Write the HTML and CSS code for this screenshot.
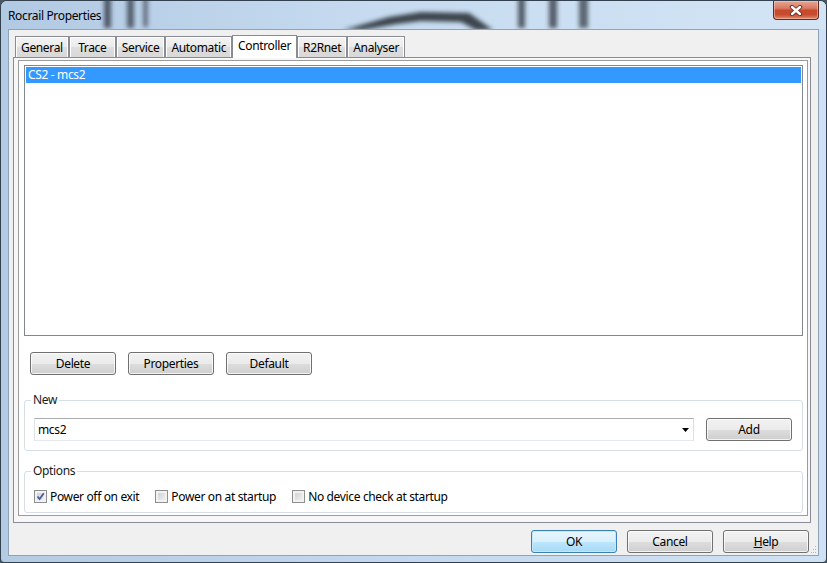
FILE: index.html
```html
<!DOCTYPE html>
<html lang="en">
<head>
    <meta charset="UTF-8">
    <meta name="viewport" content="width=device-width, initial-scale=1.0">
    <title>Rocrail Properties</title>
    <link rel="stylesheet" href="styles.css">
</head>
<body>
    <div class="window">
        <div class="titlebar">
            <!-- glass backdrop behind the caption -->
            <svg class="glass" width="825" height="28" viewBox="0 0 825 28">
                <defs>
                    <filter id="soft" x="-20%" y="-50%" width="140%" height="200%">
                        <feGaussianBlur stdDeviation="2.2"/>
                    </filter>
                </defs>
                <g filter="url(#soft)" fill="#2b333c">
                    <rect x="103" y="-4" width="7" height="31" opacity="0.75"/>
                    <rect x="126" y="-4" width="7" height="31" opacity="0.7"/>
                    <rect x="142" y="-4" width="5" height="30" opacity="0.6"/>
                    <polygon points="342,29 388,16 420,11 468,12 492,29 475,29 460,21 420,20 396,23 362,29" opacity="0.9"/>
                    <rect x="517" y="-4" width="7" height="31" opacity="0.75"/>
                    <rect x="548" y="-4" width="8" height="31" opacity="0.75"/>
                    <rect x="578" y="-4" width="9" height="31" opacity="0.7"/>
                </g>
            </svg>
            <span class="title">Rocrail Properties</span>
            <button class="close">
                <svg width="14" height="11" viewBox="0 0 14 11">
                    <path d="M3 2 L11 9 M11 2 L3 9" stroke="#6b2a20" stroke-width="4.2" stroke-linecap="round"/>
                    <path d="M3 2 L11 9 M11 2 L3 9" stroke="#fff" stroke-width="2.4" stroke-linecap="round"/>
                </svg>
            </button>
        </div>

        <div class="client">
            <div class="notebook">
                <div class="tabs">
                    <span class="tab">General</span>
                    <span class="tab">Trace</span>
                    <span class="tab">Service</span>
                    <span class="tab">Automatic</span>
                    <span class="tab active">Controller</span>
                    <span class="tab">R2Rnet</span>
                    <span class="tab">Analyser</span>
                </div>
                <div class="page">
                    <div class="panel">
                        <div class="listbox">
                            <div class="item selected">CS2 - mcs2</div>
                        </div>

                        <div class="btnrow">
                            <button class="btn">Delete</button>
                            <button class="btn">Properties</button>
                            <button class="btn">Default</button>
                        </div>

                        <fieldset class="group new-group">
                            <legend>New</legend>
                            <div class="newrow">
                                <div class="combo">
                                    <span>mcs2</span>
                                    <svg width="7" height="4" viewBox="0 0 7 4"><polygon points="0,0 7,0 3.5,4" fill="#000"/></svg>
                                </div>
                                <button class="btn">Add</button>
                            </div>
                        </fieldset>

                        <fieldset class="group options-group">
                            <legend>Options</legend>
                            <div class="checks">
                                <label class="check">
                                    <span class="box">
                                        <svg width="11" height="11" viewBox="0 0 11 11"><path d="M2.5 5.5 L4.6 8 L8.8 2.3" fill="none" stroke="#4a5d96" stroke-width="1.8"/></svg>
                                    </span>
                                    Power off on exit
                                </label>
                                <label class="check"><span class="box"></span>Power on at startup</label>
                                <label class="check"><span class="box"></span>No device check at startup</label>
                            </div>
                        </fieldset>
                    </div>
                </div>
            </div>

            <div class="dialog-buttons">
                <button class="btn default">OK</button>
                <button class="btn">Cancel</button>
                <button class="btn"><u>H</u>elp</button>
            </div>
            <svg class="grip" width="6" height="9" viewBox="0 0 6 9">
                <rect x="4" y="1" width="1" height="1" fill="#b5b5b5"/>
                <rect x="2" y="4" width="1" height="1" fill="#b5b5b5"/>
                <rect x="4" y="4" width="1" height="1" fill="#b5b5b5"/>
                <rect x="0" y="7" width="1" height="1" fill="#b5b5b5"/>
                <rect x="2" y="7" width="1" height="1" fill="#b5b5b5"/>
                <rect x="4" y="7" width="1" height="1" fill="#b5b5b5"/>
            </svg>
        </div>
    </div>
</body>
</html>
```

FILE: styles.css
```css
body {
    margin: 0;
    background: #4b5663;
    font-family: "Noto Sans", "Open Sans", sans-serif;
    font-size: 12px;
    letter-spacing: -0.35px;
    color: #000;
}

/* window frame */
.window {
    box-sizing: border-box;
    width: 827px;
    height: 563px;
    border: 1px solid #33414f;
    border-radius: 7px 7px 4px 4px;
    background: linear-gradient(90deg, #b4cbe4, #c4d9ef 50%, #cfe1f4);
    padding: 0 7px 6px;
    display: flex;
    flex-direction: column;
    overflow: hidden;
}
.titlebar {
    position: relative;
    height: 28px;
    margin: 0 -7px;
    padding: 0 7px;
    display: flex;
    justify-content: space-between;
    align-items: flex-start;
    background: linear-gradient(90deg, #b2c9e3, #c6dbf0 45%, #d3e4f5);
}
.glass {
    position: absolute;
    left: 0;
    top: 0;
}
.title {
    position: relative;
    line-height: 29px;
}
.close {
    position: relative;
    box-sizing: border-box;
    width: 46px;
    height: 19px;
    padding: 0;
    border: 1px solid #5e2a22;
    border-top: 0;
    border-radius: 0 0 4px 4px;
    background: linear-gradient(#e7a595, #d97a63 40%, #c54a2e 52%, #c94b2d 75%, #e08a6c);
    box-shadow: inset 0 0 0 1px rgba(255, 220, 210, 0.45);
    display: flex;
    align-items: center;
    justify-content: center;
}

/* dialog body */
.client {
    position: relative;
    flex: 1;
    background: #f0f0f0;
    border: 1px solid #8ea2b8;
    padding: 5px 7px 2px 4px;
    display: flex;
    flex-direction: column;
}
.notebook {
    flex: 1;
    display: flex;
    flex-direction: column;
}
.tabs {
    display: flex;
    align-items: flex-end;
    height: 22px;
    padding-left: 2px;
    position: relative;
    z-index: 1;
}
.tab {
    box-sizing: border-box;
    min-width: 47px;
    height: 21px;
    border: 1px solid #898c95;
    border-bottom: 0;
    padding: 0 5px;
    line-height: 21px;
    text-align: center;
    background: linear-gradient(#f3f3f3, #ebebeb 50%, #dedede 51%, #d8d8d8);
    box-shadow: inset 1px 1px 0 #fff, inset -1px 0 0 #fff;
}
.tab.active {
    height: 23px;
    margin-bottom: -1px;
    line-height: 20px;
    background: #fff;
    box-shadow: none;
}
.page {
    flex: 1;
    border: 1px solid #898c95;
    background: #f7f7f7;
    padding: 2px 2px 6px 4px;
    display: flex;
}
.panel {
    flex: 1;
    border: 1px solid #9b9b9b;
    background: #fff;
    padding: 4px 4px 2px 5px;
    display: flex;
    flex-direction: column;
}
.listbox {
    flex: 1;
    border: 1px solid #828790;
    padding: 1px;
    background: #fff;
}
.item {
    height: 16px;
    line-height: 16px;
    padding-left: 2px;
}
.item.selected {
    background: #3399ff;
    color: #fff;
}

/* buttons */
.btnrow {
    display: flex;
    gap: 12px;
    margin: 16px 0 0 6px;
}
.btn {
    box-sizing: border-box;
    width: 86px;
    height: 23px;
    padding: 0;
    border: 1px solid #707070;
    border-radius: 3px;
    background: linear-gradient(#f2f2f2, #ebebeb 50%, #dddddd 51%, #cfcfcf);
    box-shadow: inset 0 0 0 1px rgba(255, 255, 255, 0.75);
    font: inherit;
    letter-spacing: inherit;
    color: #000;
}
.btn.default {
    border-color: #3c7fb1;
    background: linear-gradient(#e8f5fc, #d9f0fc 50%, #bee6fd 51%, #a7d9f5);
    box-shadow: inset 0 0 0 1px #c4e8fb;
}

/* group boxes */
.group {
    margin: 0;
    min-width: 0;
    border: 1px solid #d5dfe5;
    border-radius: 3px;
}
.group legend {
    padding: 0 2px;
    margin-left: -3px;
    line-height: 16px;
    color: #1a1a1a;
}
.new-group {
    margin-top: 17px;
    padding: 10px 10px 9px 9px;
}
.options-group {
    margin-top: 12px;
    padding: 9px 10px 8px 9px;
}
.newrow {
    display: flex;
    gap: 12px;
}
.combo {
    flex: 1;
    box-sizing: border-box;
    height: 23px;
    border: 1px solid;
    border-color: #abadb3 #dbdfe6 #e3e9ef #e2e3ea;
    background: #fff;
    padding: 0 4px 0 3px;
    display: flex;
    align-items: center;
    justify-content: space-between;
}
.checks {
    display: flex;
    gap: 16px;
    height: 16px;
    align-items: center;
}
.check {
    display: flex;
    align-items: center;
    gap: 3px;
}
.box {
    box-sizing: border-box;
    width: 13px;
    height: 13px;
    border: 1px solid #8e8f8f;
    background: linear-gradient(135deg, #c9ccd2, #f6f6f6);
    box-shadow: inset 0 0 0 2px #f2f2f2;
    display: flex;
}

.dialog-buttons {
    display: flex;
    justify-content: flex-end;
    gap: 10px;
    margin: 7px 2px 0 0;
}
.grip {
    position: absolute;
    right: 1px;
    bottom: 1px;
}
```
